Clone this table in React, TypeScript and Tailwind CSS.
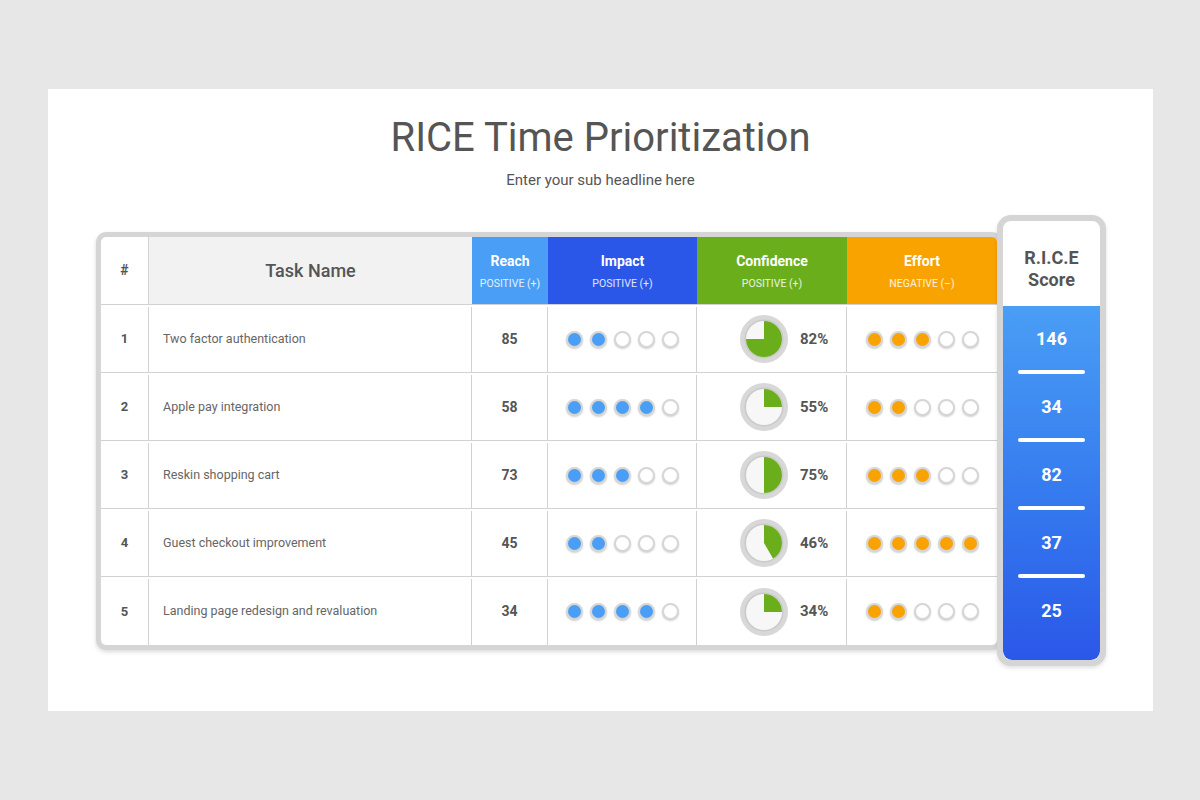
import React from "react";

const rows = [
  { id: 1, task: "Two factor authentication", reach: 85, impact: 2, angle: 270, conf: 82, effort: 3, score: 146 },
  { id: 2, task: "Apple pay integration", reach: 58, impact: 4, angle: 90, conf: 55, effort: 2, score: 34 },
  { id: 3, task: "Reskin shopping cart", reach: 73, impact: 3, angle: 180, conf: 75, effort: 3, score: 82 },
  { id: 4, task: "Guest checkout improvement", reach: 45, impact: 2, angle: 150, conf: 46, effort: 5, score: 37 },
  { id: 5, task: "Landing page redesign and revaluation", reach: 34, impact: 4, angle: 90, conf: 34, effort: 2, score: 25 },
];

function Dots({ n, fill }: { n: number; fill: string }) {
  return (
    <div className="flex gap-[7px]">
      {[0, 1, 2, 3, 4].map(i => (
        <span
          key={i}
          className={`size-[17px] rounded-full border-2 border-[#d6d6d6] shadow-[0_1px_2px_rgba(0,0,0,0.2)] ${i < n ? fill : "bg-white"}`}
        />
      ))}
    </div>
  );
}

function Pie({ angle }: { angle: number }) {
  const r = 18;
  const rad = (angle * Math.PI) / 180;
  const ex = 24 + r * Math.sin(rad);
  const ey = 24 - r * Math.cos(rad);
  const large = angle > 180 ? 1 : 0;
  return (
    <svg width="48" height="48" viewBox="0 0 48 48">
      <circle cx="24" cy="24" r="24" fill="#d8d8d8" />
      <circle cx="24" cy="24" r="19.5" fill="#c9c9c9" />
      <circle cx="24" cy="24" r="18" fill="#f7f7f7" />
      <path d={`M24 24 L24 6 A18 18 0 ${large} 1 ${ex.toFixed(2)} ${ey.toFixed(2)} Z`} fill="#6aaf1b" />
    </svg>
  );
}

function HeadCell({ title, sub, bg, w }: { title: string; sub: string; bg: string; w: string }) {
  return (
    <div className={`${w} ${bg} flex flex-col items-center justify-center pt-[2px] text-white`}>
      <div className="text-[14px] font-bold leading-[18px]">{title}</div>
      <div className="mt-[7px] text-[10.5px] leading-[13px] text-white/85">{sub}</div>
    </div>
  );
}

export default function App() {
  return (
    <div className="h-[800px] w-[1200px] overflow-hidden bg-[#e8e7e8] pt-[89px] font-['Roboto',sans-serif] text-[#555]">
      <div className="ml-[48px] flex h-[622px] w-[1105px] flex-col bg-white">
        <h1 className="mt-[27px] text-center text-[40px] leading-[44px] font-normal text-[#555]">RICE Time Prioritization</h1>
        <p className="mt-[10px] text-center text-[15px] leading-[20px] text-[#555]">Enter your sub headline here</p>

        <div className="mt-[25px] flex items-center pl-[48px]">
          {/* table */}
          <div className="w-[906px] overflow-hidden rounded-[10px] border-[5px] border-[#d5d5d5] bg-white shadow-[0_2px_4px_rgba(0,0,0,0.15)]">
            <div className="flex h-[68px] border-b border-[#d2d2d2]">
              <div className="flex w-[48px] items-center justify-center border-r border-[#d2d2d2] text-[14px] font-bold">#</div>
              <div className="flex w-[323px] items-center justify-center bg-[#f2f2f2] text-[18px] font-medium">Task Name</div>
              <HeadCell title="Reach" sub="POSITIVE (+)" bg="bg-[#4a9ef5]" w="w-[76px]" />
              <HeadCell title="Impact" sub="POSITIVE (+)" bg="bg-[#2b57e8]" w="w-[149px]" />
              <HeadCell title="Confidence" sub="POSITIVE (+)" bg="bg-[#6aaf1b]" w="w-[150px]" />
              <HeadCell title="Effort" sub="NEGATIVE (–)" bg="bg-[#f9a300]" w="w-[150px]" />
            </div>
            {rows.map((r, i) => (
              <div key={r.id} className={`flex h-[68px] pt-[2px] ${i < rows.length - 1 ? "border-b border-[#d2d2d2]" : ""}`}>
                <div className="flex w-[48px] items-center justify-center border-r border-[#d2d2d2] text-[13px] font-bold">{r.id}</div>
                <div className="flex w-[323px] items-center border-r border-[#d2d2d2] pl-[14px] text-[12.5px] text-[#666]">{r.task}</div>
                <div className="flex w-[76px] items-center justify-center border-r border-[#d2d2d2] text-[14px] font-bold">{r.reach}</div>
                <div className="flex w-[149px] items-center justify-center border-r border-[#d2d2d2]">
                  <Dots n={r.impact} fill="bg-[#4a9ef5]" />
                </div>
                <div className="flex w-[150px] items-center gap-[12px] border-r border-[#d2d2d2] pl-[43px]">
                  <Pie angle={r.angle} />
                  <span className="text-[15px] font-bold">{r.conf}%</span>
                </div>
                <div className="flex w-[150px] items-center justify-center">
                  <Dots n={r.effort} fill="bg-[#f9a300]" />
                </div>
              </div>
            ))}
          </div>

          {/* score column */}
          <div className="relative z-10 -ml-[5px] flex h-[451px] w-[109px] flex-col overflow-hidden rounded-[14px] border-[6px] border-[#d5d5d5] bg-white shadow-[0_2px_4px_rgba(0,0,0,0.12)]">
            <div className="flex h-[85px] flex-col items-center justify-center pt-[10px] text-[18px] leading-[22px] font-bold text-[#555]">
              <span>R.I.C.E</span>
              <span>Score</span>
            </div>
            <div className="flex flex-1 flex-col rounded-[9px] rounded-t-none bg-gradient-to-b from-[#4a9ef5] to-[#2b57e8]">
              {rows.map((r, i) => (
                <React.Fragment key={r.id}>
                  <div className="flex h-[64px] items-center justify-center text-[18px] font-bold text-white">{r.score}</div>
                  {i < rows.length - 1 && <div className="mx-auto h-[4px] w-[67px] rounded-full bg-white" />}
                </React.Fragment>
              ))}
            </div>
          </div>
        </div>
      </div>
    </div>
  );
}
